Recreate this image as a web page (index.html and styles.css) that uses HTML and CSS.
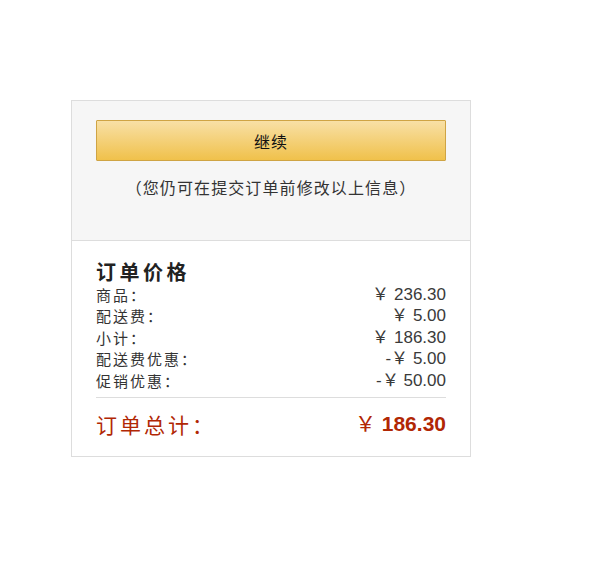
FILE: index.html
```html
<!DOCTYPE html>
<html lang="zh-CN">
<head>
  <meta charset="UTF-8" />
  <title>订单价格</title>
  <link rel="stylesheet" href="styles.css">
</head>
<body>

  <!-- Order summary box -->
  <div class="order-box">
    <div class="order-actions">
      <button class="continue-btn">继续</button>
      <p class="note">（您仍可在提交订单前修改以上信息）</p>
    </div>

    <div class="order-summary">
      <h2>订单价格</h2>
      <div class="row"><span>商品：</span><span class="num">￥ 236.30</span></div>
      <div class="row"><span>配送费：</span><span class="num">￥ 5.00</span></div>
      <div class="row"><span>小计：</span><span class="num">￥ 186.30</span></div>
      <div class="row"><span>配送费优惠：</span><span class="num">-￥ 5.00</span></div>
      <div class="row"><span>促销优惠：</span><span class="num">-￥ 50.00</span></div>

      <div class="total">
        <span>订单总计：</span>
        <span class="num"><span class="yen">￥</span> 186.30</span>
      </div>
    </div>
  </div>

</body>
</html>
```

FILE: styles.css
```css
body {
  margin: 0;
  background: #fff;
  font-family: "Noto Sans CJK SC", "Liberation Sans", sans-serif;
  color: #333;
}

.order-box {
  width: 398px;
  margin: 100px 0 0 71px;
  border: 1px solid #ddd;
}

/* Top part */
.order-actions {
  background: #f6f6f6;
  border-bottom: 1px solid #ddd;
  padding: 19px 24px 0;
  height: 120px;
}

.continue-btn {
  display: block;
  width: 350px;
  height: 41px;
  background: linear-gradient(to bottom, #f8e0a6, #f0c14b);
  border: 1px solid #cfa444;
  border-radius: 1px;
  font-family: "Noto Sans CJK SC", sans-serif;
  font-size: 16px;
  letter-spacing: 1px;
  color: #111;
  cursor: pointer;
}

.note {
  margin: 15px 0 0;
  text-align: center;
  font-size: 16px;
  letter-spacing: 1.1px;
  line-height: 22px;
  color: #333;
}

/* Price list */
.order-summary {
  padding: 18px 24px 18px;
}

.order-summary h2 {
  margin: 0;
  font-size: 20px;
  letter-spacing: 3.5px;
  line-height: 25px;
  font-weight: bold;
  color: #222;
}

.row {
  display: flex;
  justify-content: space-between;
  font-size: 15px;
  letter-spacing: 2px;
  line-height: 21.4px;
}

.num {
  font-family: "Liberation Sans", Arial, sans-serif;
  font-size: 17px;
  letter-spacing: 0;
  color: #3a3a3a;
}

.total {
  display: flex;
  justify-content: space-between;
  align-items: center;
  margin-top: 6px;
  border-top: 1px solid #ddd;
  padding-top: 12px;
  font-size: 21px;
  letter-spacing: 3px;
  line-height: 28px;
  color: #b12704;
}

.total .num {
  font-size: 21px;
  font-weight: bold;
  color: #b12704;
}

.total .yen {
  font-weight: normal;
}
```
